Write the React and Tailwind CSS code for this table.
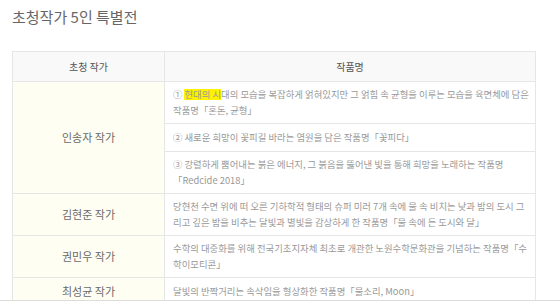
export default function App() {
  const font = { fontFamily: '"Noto Sans CJK KR", "Noto Sans", sans-serif' };
  const td = "border border-[#e6e6e6] px-[8px] py-0 align-middle text-[9.4px] leading-[15.6px] text-[#999] whitespace-nowrap";
  const name = "border border-[#e6e6e6] bg-[#fffef3] text-center align-middle text-[11px] text-[#6a6a6a]";
  return (
    <div className="w-[560px] h-[304px] overflow-hidden bg-white relative" style={font}>
      <div className="pl-[12px] pt-[7px] text-[15px] leading-[20px] text-[#666]">초청작가 5인 특별전</div>
      <table className="ml-[12px] mt-[24px] w-[524px] border-collapse table-fixed">
        <colgroup>
          <col className="w-[152px]" />
          <col />
        </colgroup>
        <thead>
          <tr className="h-[30px] bg-[#f9f9f9]">
            <th className="border border-[#e6e6e6] font-normal text-[10px] text-[#555] align-middle">초청 작가</th>
            <th className="border border-[#e6e6e6] font-normal text-[10px] text-[#555] align-middle">작품명</th>
          </tr>
        </thead>
        <tbody>
          <tr className="h-[42px]">
            <td rowSpan={3} className={name}>인송자 작가</td>
            <td className={td}>
              ① <span className="bg-[linear-gradient(transparent_15%,#fff200_15%,#fff200_95%,transparent_95%)]">현대의 시</span>대의 모습을 복잡하게 얽혀있지만 그 얽힘 속 균형을 이루는 모습을 육면체에 담은
              <br />작품명「혼돈, 균형」
            </td>
          </tr>
          <tr className="h-[28px]">
            <td className={td}>② 새로운 희망이 꽃피길 바라는 염원을 담은 작품명「꽃피다」</td>
          </tr>
          <tr className="h-[42px]">
            <td className={td}>
              ③ 강렬하게 뿜어내는 붉은 에너지, 그 붉음을 뚫어낸 빛을 통해 희망을 노래하는 작품명
              <br />「Redcide 2018」
            </td>
          </tr>
          <tr className="h-[42px]">
            <td className={name}>김현준 작가</td>
            <td className={td}>
              당현천 수면 위에 떠 오른 기하학적 형태의 슈퍼 미러 7개 속에 물 속 비치는 낮과 밤의 도시 그
              <br />리고 깊은 밤을 비추는 달빛과 별빛을 감상하게 한 작품명「물 속에 든 도시와 달」
            </td>
          </tr>
          <tr className="h-[42px]">
            <td className={name}>권민우 작가</td>
            <td className={td}>
              수학의 대중화를 위해 전국기초지자체 최초로 개관한 노원수학문화관을 기념하는 작품명「수
              <br />학이모티콘」
            </td>
          </tr>
          <tr className="h-[28px]">
            <td className={name}>최성균 작가</td>
            <td className={td}>달빛의 반짝거리는 속삭임을 형상화한 작품명「물소리, Moon」</td>
          </tr>
        </tbody>
      </table>
      <div className="absolute left-0 right-0 top-[300px] h-[4px] border-t border-[#dcdcdc] bg-white" />
    </div>
  );
}
